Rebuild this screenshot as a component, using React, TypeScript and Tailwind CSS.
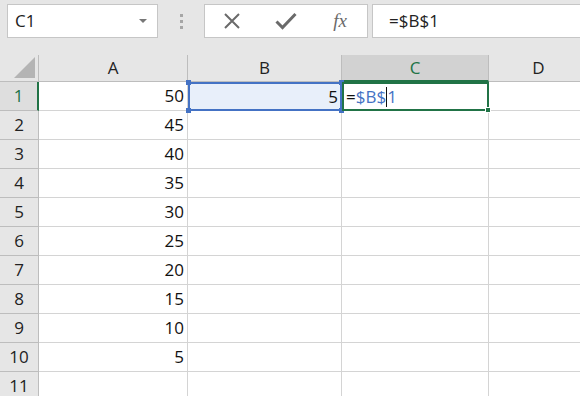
const cols = [
  { name: "A", w: 149 },
  { name: "B", w: 154 },
  { name: "C", w: 147 },
  { name: "D", w: 100 },
]

const valuesA = [50, 45, 40, 35, 30, 25, 20, 15, 10, 5, null]

function Cross() {
  return (
    <svg width="18" height="18" viewBox="0 0 18 18">
      <path d="M2 2 L16 16 M16 2 L2 16" stroke="#6a6a6a" strokeWidth="2" fill="none" />
    </svg>
  )
}

function Check() {
  return (
    <svg width="22" height="18" viewBox="0 0 22 18">
      <path d="M1.5 9.5 L7.5 15.5 L20.5 2" stroke="#6a6a6a" strokeWidth="3" fill="none" />
    </svg>
  )
}

export default function App() {
  return (
    <div
      className="w-[580px] h-[396px] overflow-hidden bg-[#e6e6e6] flex flex-col"
      style={{ fontFamily: "'Open Sans', 'Noto Sans', sans-serif" }}
    >
      {/* formula bar */}
      <div className="h-[55px] flex items-start pt-[4px] shrink-0">
        <div className="ml-[7px] w-[151px] h-[34px] bg-white border border-[#c6c6c6] flex items-center pl-[7px] pr-[10px]">
          <span className="text-[17px] text-[#222] flex-1">C1</span>
          <span className="w-0 h-0 border-l-[4px] border-r-[4px] border-t-[4px] border-l-transparent border-r-transparent border-t-[#777]" />
        </div>
        <div className="w-[46px] h-[34px] flex flex-col items-center justify-center gap-[3px]">
          <span className="w-[3px] h-[3px] bg-[#a6a6a6]" />
          <span className="w-[3px] h-[3px] bg-[#a6a6a6]" />
          <span className="w-[3px] h-[3px] bg-[#a6a6a6]" />
        </div>
        <div className="w-[164px] h-[34px] bg-white border border-[#c6c6c6] flex items-center">
          <div className="w-[54px] flex justify-center"><Cross /></div>
          <div className="w-[54px] flex justify-center"><Check /></div>
          <div
            className="w-[54px] flex justify-center text-[19px] italic text-[#6a6a6a]"
            style={{ fontFamily: "'Liberation Serif', serif" }}
          >
            fx
          </div>
        </div>
        <div className="ml-[4px] flex-1 h-[34px] bg-white border border-r-0 border-[#c6c6c6] flex items-center pl-[16px]">
          <span className="text-[17px] text-[#222]">=$B$1</span>
        </div>
      </div>

      {/* grid */}
      <div className="flex-1 flex flex-col">
        <div className="flex h-[27px] shrink-0">
          <div className="w-[39px] shrink-0 border-r border-b border-[#bdbdbd] bg-[#e6e6e6] relative">
            <span className="absolute right-[3px] bottom-[3px] w-0 h-0 border-l-[21px] border-b-[21px] border-l-transparent border-b-[#b4b4b4]" />
          </div>
          {cols.map((c) => {
            const sel = c.name === "C"
            return (
              <div
                key={c.name}
                style={{ width: c.w }}
                className={
                  sel
                    ? "shrink-0 border-r border-[#bdbdbd] border-b-2 border-b-[#217346] bg-[#d2d2d2] flex items-center justify-center text-[17px] text-[#217346]"
                    : "shrink-0 border-r border-b border-[#bdbdbd] bg-[#e6e6e6] flex items-center justify-center text-[17px] text-[#222]"
                }
              >
                {c.name}
              </div>
            )
          })}
        </div>

        {valuesA.map((v, i) => {
          const row = i + 1
          const first = row === 1
          return (
            <div key={row} className="flex h-[29px] shrink-0">
              <div
                className={
                  first
                    ? "w-[39px] shrink-0 border-b border-[#bdbdbd] border-r-2 border-r-[#217346] bg-[#dedede] flex items-center justify-center text-[17px] text-[#217346]"
                    : "w-[39px] shrink-0 border-r border-b border-[#bdbdbd] bg-[#e6e6e6] flex items-center justify-center text-[17px] text-[#222]"
                }
              >
                {row}
              </div>
              <div className="w-[149px] shrink-0 bg-white border-r border-b border-[#d4d4d4] flex items-center justify-end pr-[3px] text-[17px] text-[#111]">
                {v}
              </div>
              {first ? (
                <>
                  <div className="w-[154px] shrink-0 relative bg-[#e8effa] border-[#4472c4] border-2 flex items-center justify-end pr-[2px] text-[17px] text-[#111]">
                    5
                    <span className="absolute -left-[4px] -top-[4px] w-[5px] h-[5px] bg-[#4472c4]" />
                    <span className="absolute -right-[4px] -top-[4px] w-[5px] h-[5px] bg-[#4472c4]" />
                    <span className="absolute -left-[4px] -bottom-[4px] w-[5px] h-[5px] bg-[#4472c4]" />
                    <span className="absolute -right-[4px] -bottom-[4px] w-[5px] h-[5px] bg-[#4472c4]" />
                  </div>
                  <div className="w-[147px] shrink-0 relative bg-white border-2 border-[#217346] flex items-center pl-[2px] text-[17px]">
                    <span className="text-[#111]">=</span>
                    <span className="text-[#4472c4]">$B$</span>
                    <span className="w-px h-[20px] bg-[#111]" />
                    <span className="text-[#4472c4]">1</span>
                    <span className="absolute -right-[4px] -bottom-[4px] w-[6px] h-[6px] bg-[#217346] border border-white" />
                  </div>
                </>
              ) : (
                <>
                  <div className="w-[154px] shrink-0 bg-white border-r border-b border-[#d4d4d4]" />
                  <div className="w-[147px] shrink-0 bg-white border-r border-b border-[#d4d4d4]" />
                </>
              )}
              <div className="w-[100px] shrink-0 bg-white border-r border-b border-[#d4d4d4]" />
            </div>
          )
        })}
      </div>
    </div>
  )
}
